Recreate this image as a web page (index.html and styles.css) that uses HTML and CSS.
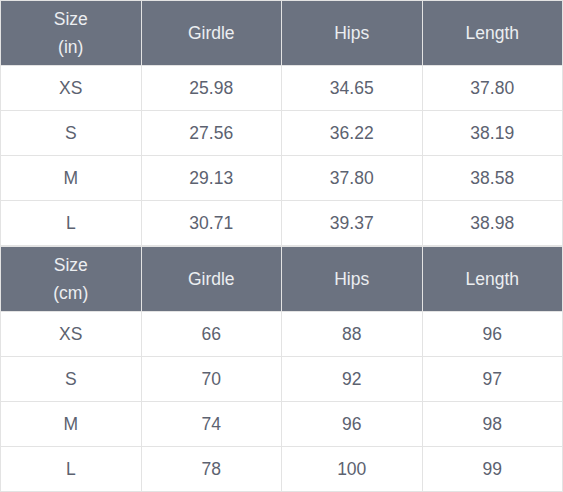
FILE: index.html
```html
<!DOCTYPE html>
<html>
<head>
<meta charset="utf-8">
<link rel="stylesheet" href="styles.css">
</head>
<body>
<table class="size-table">
  <tr><th>Size<br>(in)</th><th>Girdle</th><th>Hips</th><th>Length</th></tr>
  <tr><td>XS</td><td>25.98</td><td>34.65</td><td>37.80</td></tr>
  <tr><td>S</td><td>27.56</td><td>36.22</td><td>38.19</td></tr>
  <tr><td>M</td><td>29.13</td><td>37.80</td><td>38.58</td></tr>
  <tr><td>L</td><td>30.71</td><td>39.37</td><td>38.98</td></tr>
</table>
<table class="size-table">
  <tr><th>Size<br>(cm)</th><th>Girdle</th><th>Hips</th><th>Length</th></tr>
  <tr><td>XS</td><td>66</td><td>88</td><td>96</td></tr>
  <tr><td>S</td><td>70</td><td>92</td><td>97</td></tr>
  <tr><td>M</td><td>74</td><td>96</td><td>98</td></tr>
  <tr><td>L</td><td>78</td><td>100</td><td>99</td></tr>
</table>
</body>
</html>
```
FILE: styles.css
```css
html, body {
  margin: 0;
  padding: 0;
  background: #ffffff;
}
.size-table {
  width: 563px;
  border-collapse: collapse;
  table-layout: fixed;
  font-family: "Liberation Sans", Arial, sans-serif;
  font-size: 17.5px;
}
.size-table th,
.size-table td {
  border: 1px solid #e3e3e3;
  text-align: center;
  vertical-align: middle;
  padding: 0;
}
.size-table th {
  background: #6b7280;
  color: #eceef1;
  font-weight: normal;
  height: 64px;
  line-height: 28px;
}
.size-table td {
  color: #5c6270;
  height: 44px;
}
```
